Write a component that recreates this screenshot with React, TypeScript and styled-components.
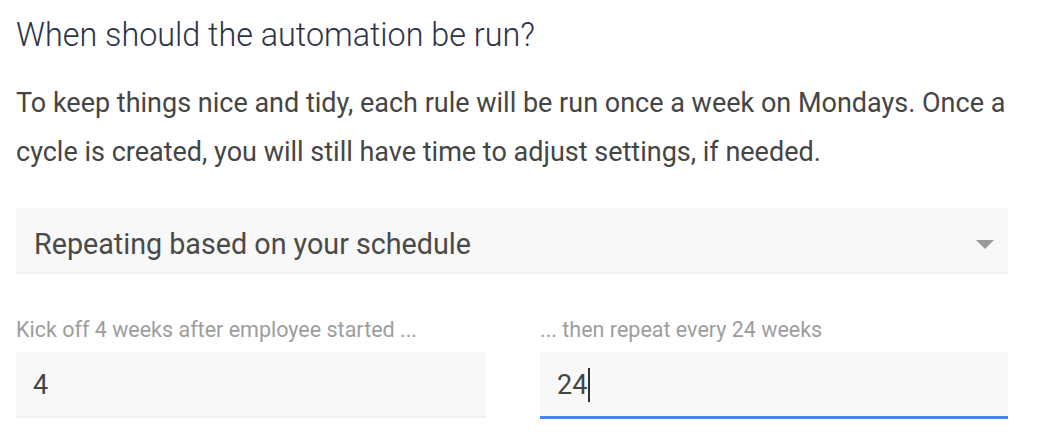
import React from "react";
import styled, { createGlobalStyle } from "styled-components";

const GlobalStyle = createGlobalStyle`
  html, body { margin: 0; padding: 0; background: #ffffff; }
  body { font-family: Roboto, "Noto Sans", "Liberation Sans", sans-serif; }
  * { box-sizing: border-box; }
`;

const Page = styled.div`
  width: 1048px;
  padding: 17px 40px 0 16px;
`;

const Title = styled.h2`
  margin: 0;
  font-size: 32.3px;
  line-height: 36px;
  font-weight: 300;
  color: #2c3345;
`;

const Intro = styled.p`
  margin: 26px 0 0;
  font-size: 27px;
  line-height: 49px;
  font-weight: 400;
  color: #454545;
`;

const Select = styled.div`
  position: relative;
  margin-top: 31px;
  height: 66px;
  padding: 22px 18px 0;
  background: #f8f8f8;
  border-bottom: 2px solid #f0f0f0;
  font-size: 28.7px;
  line-height: 28px;
  color: #4a4a4a;
`;

const Caret = styled.span`
  position: absolute;
  right: 14px;
  top: 32px;
  width: 0;
  height: 0;
  border-left: 9px solid transparent;
  border-right: 9px solid transparent;
  border-top: 9px solid #9a9a9a;
`;

const Fields = styled.div`
  display: grid;
  grid-template-columns: 470px 1fr;
  column-gap: 54px;
  margin-top: 44px;
`;

const Field = styled.div`
  display: flex;
  flex-direction: column;
  gap: 10px;
`;

const Label = styled.label`
  font-size: 21.5px;
  line-height: 24px;
  color: #9d9d9d;
  white-space: nowrap;
`;

const Input = styled.div<{ $focused?: boolean }>`
  height: ${(p) => (p.$focused ? 67 : 66)}px;
  padding: 20px 17px 0;
  background: #f8f8f8;
  border-bottom: ${(p) => (p.$focused ? "3px solid #4285f4" : "2px solid #f0f0f0")};
  font-size: 27px;
  line-height: 27px;
  color: #444444;
  display: flex;
  align-items: flex-start;
`;

const TextCaret = styled.span`
  display: inline-block;
  width: 2px;
  height: 34px;
  margin-top: -4px;
  margin-left: 1px;
  background: #333333;
`;

export default function App() {
  return (
    <>
      <GlobalStyle />
      <Page>
        <Title>When should the automation be run?</Title>
        <Intro>
          To keep things nice and tidy, each rule will be run once a week on Mondays. Once a
          cycle is created, you will still have time to adjust settings, if needed.
        </Intro>
        <Select>
          Repeating based on your schedule
          <Caret />
        </Select>
        <Fields>
          <Field>
            <Label>Kick off 4 weeks after employee started ...</Label>
            <Input>4</Input>
          </Field>
          <Field>
            <Label>... then repeat every 24 weeks</Label>
            <Input $focused>
              24
              <TextCaret />
            </Input>
          </Field>
        </Fields>
      </Page>
    </>
  );
}
